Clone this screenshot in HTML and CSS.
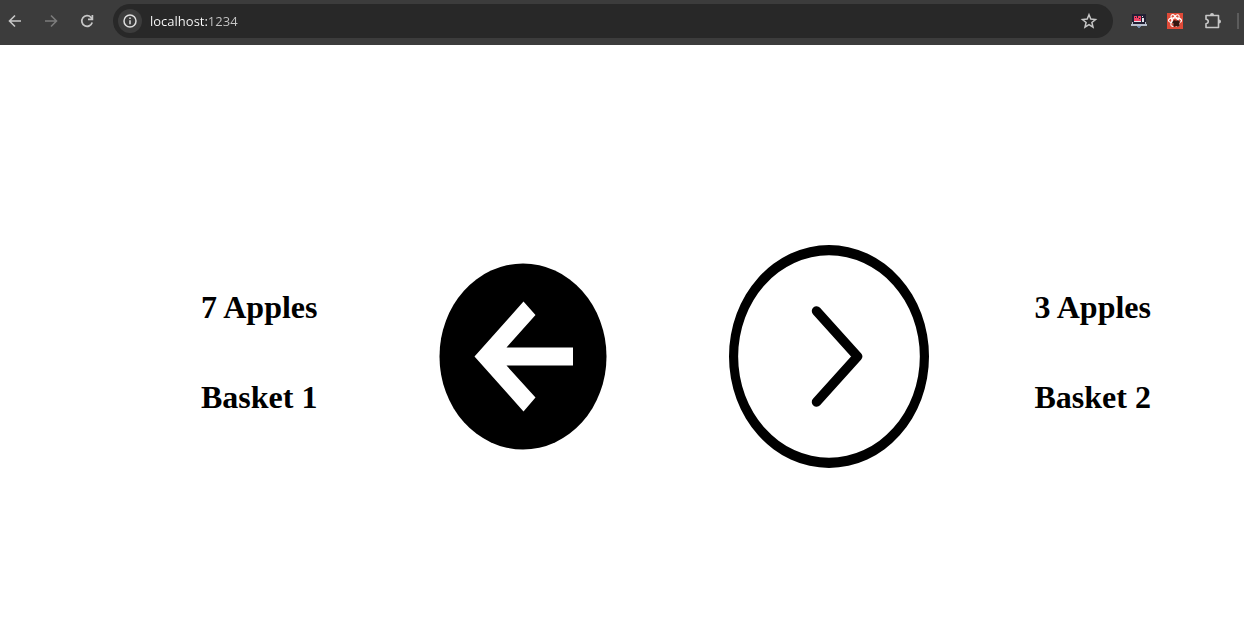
FILE: index.html
```html
<!DOCTYPE html>
<html lang="en">
<head>
<meta charset="utf-8">
<title>Apples</title>
<link rel="stylesheet" href="styles.css">
</head>
<body>
<header class="toolbar">
  <nav class="nav" aria-label="Browser">
    <button class="tool" aria-label="Back"><svg width="16" height="16" viewBox="0 0 16 16" fill="none" stroke="#c7c7c7" stroke-width="1.6"><path d="M14 8H3M8 2.500 2.500 8 8 13.500"/></svg></button>
    <button class="tool" aria-label="Forward"><svg width="16" height="16" viewBox="0 0 16 16" fill="none" stroke="#7c7c7c" stroke-width="1.6"><path d="M2 8h11M8 2.500 13.500 8 8 13.500"/></svg></button>
    <button class="tool" aria-label="Reload"><svg width="16" height="16" viewBox="0 0 16 16" fill="none" stroke="#c7c7c7" stroke-width="1.7"><path d="M13.200 9.500A5.300 5.300 0 1 1 12 4.400L13.300 6"/><path d="M13.400 2v4.400H9"/></svg></button>
  </nav>
  <div class="address">
    <button class="info" aria-label="Site information"><svg width="16" height="16" viewBox="0 0 16 16" fill="none" stroke="#dedede" stroke-width="1.500"><circle cx="8" cy="8" r="6"/><path d="M8 7.200v4M8 4.600v1.500"/></svg></button>
    <input class="url" type="text" aria-label="Address" value="localhost:1234">
    <button class="tool" aria-label="Bookmark"><svg width="18" height="18" viewBox="0 0 18 18" fill="none" stroke="#c7c7c7" stroke-width="1.500"><path d="m9 2.800 1.800 4.300 4.700.4-3.600 3 1.100 4.600-4-2.500-4 2.500 1.100-4.600-3.600-3 4.700-.4z"/></svg></button>
  </div>
  <div class="extensions">
    <button class="tool" aria-label="Screen extension"><svg width="16" height="16" viewBox="0 0 16 16"><path fill="#222034" d="M1 1h14v10H1z"/><path fill="#f34265" d="M3 3h7v5H3z"/><path fill="#222034" d="M4 4h1v1H4zM6 3h1v2H6zM8 5h1v1H8z"/><path fill="#e5e5ec" d="M11 5h2v4h-2zM3 8h7v1H3zM11 3h1v1h-1z"/><path fill="#b8bfcc" d="M0 11h16v2H0zM1 9h1v2H1zM14 9h1v2h-1z"/><path fill="#7089a8" d="M6 13h4v1H6zM7 14h2v1H7z"/></svg></button>
    <button class="tool" aria-label="React tools"><svg width="16" height="16" viewBox="0 0 16 16"><path fill="#df4a38" d="M0 0h16v16H0z"/><g fill="none" stroke="#fff" stroke-width="1.100"><ellipse cx="8" cy="7.500" rx="6.500" ry="2.600"/><ellipse cx="8" cy="7.500" rx="6.500" ry="2.600" transform="rotate(60 8 7.500)"/><ellipse cx="8" cy="7.500" rx="6.500" ry="2.600" transform="rotate(120 8 7.500)"/></g><path fill="#35150f" d="m6 8 2-1 1 1 2-1 2 2-1 2 1 1-2 2-2-1-2 1-1-2 1-1-2-1z"/></svg></button>
    <button class="tool" aria-label="Extensions"><svg width="20" height="20" viewBox="0 0 20 20" fill="none" stroke="#c7c7c7" stroke-width="1.600" stroke-linejoin="round"><path d="M3 4.500h12.500v12H3v-3.800c3-.5 3-3.900 0-4.400z"/><path fill="#c7c7c7" stroke="none" d="M7 4a2 2 0 0 1 4 0zM16 8.500a2 2 0 0 1 0 4z"/></svg></button>
    <span class="divider"></span>
  </div>
</header>
<main class="baskets">
  <section class="basket"><h1>7 Apples</h1><h1>Basket 1</h1></section>
  <button class="move" aria-label="Move apple to basket 1"><svg viewBox="0 0 200 223"><ellipse cx="100" cy="111.500" rx="83.500" ry="93"/><path fill="#fff" d="m51.500 111.500 49-55 12 13.500-29 32.500H150v18H83.500l29 32-12 14z"/></svg></button>
  <button class="move" aria-label="Move apple to basket 2"><svg viewBox="0 0 200 223"><path fill-rule="evenodd" d="M100 0a100 111.500 0 1 0 0 223 100 111.500 0 1 0 0-223zm0 10.300a90.800 101.200 0 1 1 0 202.400 90.800 101.200 0 1 1 0-202.400z"/><path fill="none" stroke="#000" stroke-width="9.500" stroke-linecap="round" stroke-linejoin="round" d="m87.500 66 41 45.500-41 45.500"/></svg></button>
  <section class="basket"><h1>3 Apples</h1><h1>Basket 2</h1></section>
</main>
</body>
</html>
```
FILE: styles.css
```css
* { box-sizing: border-box; }
body { margin: 0; background: #fff; color: #000; font-family: "Liberation Serif", "Times New Roman", serif; }
button { padding: 0; border: 0; background: none; cursor: pointer; }
svg { display: block; }
.toolbar { display: flex; align-items: center; height: 45px; padding: 0 5px 3px 7px; background: #3c3c3c; overflow: hidden; }
.nav { display: flex; gap: 20px; margin-right: 18px; }
.address { display: flex; flex: 1; align-items: center; height: 34px; padding: 0 15px 0 5px; border-radius: 17px; background: #282828; }
.info { display: grid; place-items: center; width: 24px; height: 24px; border-radius: 50%; background: #3c3c3c; }
.url {
  flex: 1; min-width: 0; padding: 0 0 0 8px; border: 0; outline: 0;
  font: 13px/20px "Open Sans", "Noto Sans", sans-serif;
  color: transparent;
  background: linear-gradient(to right, #fff 66px, #c7c7c7 66px);
  background-clip: text;
  -webkit-background-clip: text;
}
.extensions { display: flex; align-items: center; gap: 20px; margin-left: 18px; }
.divider { width: 2px; height: 16px; margin-left: -6px; background: #5c5c5c; }
.baskets { display: flex; justify-content: space-between; align-items: center; padding: 200px 93px 0 201px; }
.basket { display: flex; flex-direction: column; gap: 54px; padding-bottom: 10px; }
.basket h1 { margin: 0; font-size: 32px; line-height: 36px; white-space: nowrap; }
.move { width: 200px; }
```
